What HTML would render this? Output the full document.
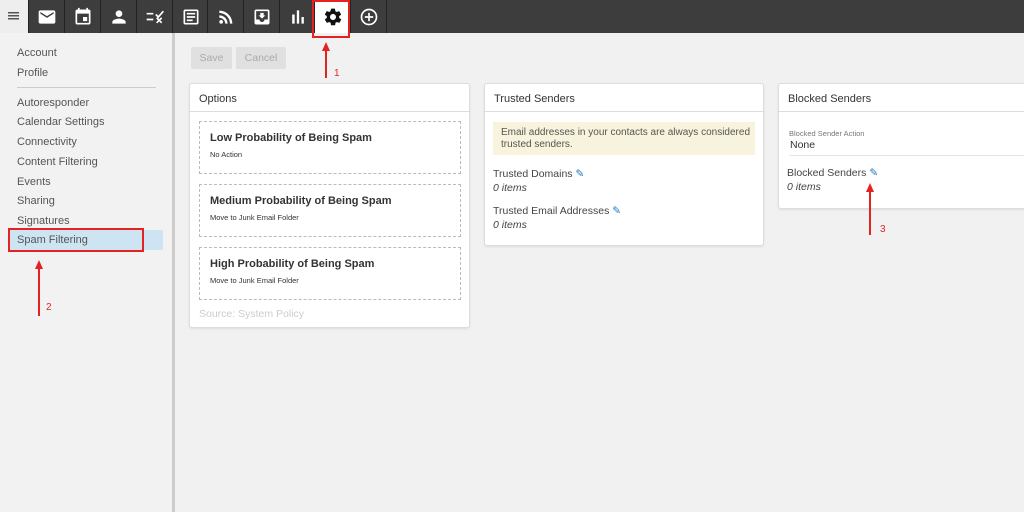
<!DOCTYPE html>
<html><head><style>
*{box-sizing:border-box;margin:0;padding:0}
body{width:1024px;height:512px;overflow:hidden;background:#f1f1f1;font-family:"Liberation Sans",sans-serif;position:relative;color:#333}
.top{position:absolute;left:0;top:0;width:1024px;height:33px;background:#3d3d3d}
.ham{position:absolute;left:0;top:0;width:28px;height:33px;background:#eee}
.tab{position:absolute;top:0;width:36px;height:33px;border-left:1px solid #222;display:flex;align-items:center;justify-content:center}
.side{position:absolute;left:0;top:33px;width:175px;height:479px;background:#f2f2f2;border-right:3px solid #ccc}
.side div{position:absolute;left:17px;font-size:11px;color:#555}
.card{position:absolute;background:#fff;border:1px solid #ddd;border-radius:3px;box-shadow:0 1px 2px rgba(0,0,0,.08)}
.hd{height:28px;border-bottom:1px solid #ddd;font-size:11px;padding:9px 9px}
.box{position:absolute;left:9px;width:262px;height:53px;border:1px dashed #bbb}
.box b{position:absolute;left:10px;top:10px;font-size:11px;color:#333}
.box span{position:absolute;left:10px;top:28px;font-size:7.5px;color:#333}
.t{position:absolute;font-size:10.5px;color:#444}
.i{position:absolute;font-size:10.5px;font-style:italic;color:#444}
.btn{position:absolute;top:47px;height:22px;background:#e0e0e0;color:#aaa;font-size:10.5px;display:flex;align-items:center;justify-content:center;border-radius:2px}
.red{position:absolute;border:2px solid #e52222}
.arr{position:absolute;width:2px;background:#e52222}
.ah{position:absolute;width:0;height:0;border-left:4px solid transparent;border-right:4px solid transparent;border-bottom:9px solid #e52222}
.n{position:absolute;color:#e52222;font-size:10px}
</style></head><body>
<div class="top">
<div class="ham"><svg width="28" height="33"><rect x="8" y="12" width="11" height="1.5" fill="#555"/><rect x="8" y="15" width="11" height="1.5" fill="#555"/><rect x="8" y="18" width="11" height="1.5" fill="#555"/></svg></div>
<div class="tab" style="left:28px"><svg width="20" height="20" viewBox="0 0 24 24"><path fill="#fff" d="M20 4H4c-1.1 0-2 .9-2 2v12c0 1.1.9 2 2 2h16c1.1 0 2-.9 2-2V6c0-1.1-.9-2-2-2zm0 4l-8 5-8-5V6l8 5 8-5v2z"/></svg></div>
<div class="tab" style="left:64px"><svg width="20" height="20" viewBox="0 0 24 24"><path fill="#fff" d="M17 12h-5v5h5v-5zM16 1v2H8V1H6v2H5c-1.1 0-2 .9-2 2v14c0 1.1.9 2 2 2h14c1.1 0 2-.9 2-2V5c0-1.1-.9-2-2-2h-1V1h-2zm3 18H5V8h14v11z"/></svg></div>
<div class="tab" style="left:100px"><svg width="20" height="20" viewBox="0 0 24 24"><path fill="#fff" d="M12 12c2.2 0 4-1.8 4-4s-1.8-4-4-4-4 1.8-4 4 1.8 4 4 4zm0 2c-2.7 0-8 1.3-8 4v2h16v-2c0-2.700-5.3-4-8-4z"/></svg></div>
<div class="tab" style="left:136px"><svg width="20" height="20" viewBox="0 0 24 24"><path fill="none" stroke="#fff" stroke-width="2" d="M2 8h8M2 15h8M13 9l3 3 6-7M14 13l6 6M20 13l-6 6"/></svg></div>
<div class="tab" style="left:172px"><svg width="20" height="20" viewBox="0 0 24 24"><path fill="#fff" d="M19 3H5c-1.1 0-2 .9-2 2v14c0 1.1.9 2 2 2h14c1.1 0 2-.9 2-2V5c0-1.1-.9-2-2-2zm0 16H5V5h14v14zM7 7h10v2H7zm0 4h10v2H7zm0 4h7v2H7z"/></svg></div>
<div class="tab" style="left:207px"><svg width="20" height="20" viewBox="0 0 24 24"><circle cx="6.2" cy="17.8" r="2.2" fill="#fff"/><path fill="#fff" d="M4 4.4v2.8c7 0 12.8 5.8 12.8 12.8h2.8C19.6 11.4 12.6 4.4 4 4.4zm0 5.7v2.8c3.9 0 7.1 3.2 7.1 7.1h2.8c0-5.5-4.4-9.9-9.900-9.9z"/></svg></div>
<div class="tab" style="left:243px"><svg width="20" height="20" viewBox="0 0 24 24"><path fill="#fff" d="M19 3H5c-1.1 0-2 .9-2 2v14c0 1.1.9 2 2 2h14c1.1 0 2-.9 2-2V5c0-1.1-.9-2-2-2zm0 12h-4c0 1.7-1.3 3-3 3s-3-1.3-3-3H5V5h14v10zm-3-5h-2V7h-4v3H8l4 4 4-4z"/></svg></div>
<div class="tab" style="left:279px"><svg width="20" height="20" viewBox="0 0 24 24"><path fill="#fff" d="M5 9h3v11H5zm5.6-5h2.8v16h-2.8zm5.6 8H19v8h-2.8z"/></svg></div>
<div class="tab" style="left:314px;background:#fff"><svg width="20" height="20" viewBox="0 0 24 24"><path fill="#111" d="M19.4 13c.04-.3.06-.6.06-1s-.02-.7-.07-1l2.1-1.6c.2-.15.24-.42.12-.64l-2-3.5c-.12-.2-.4-.3-.6-.2l-2.5 1c-.5-.4-1.1-.7-1.7-1l-.4-2.6C14.4 2.2 14.2 2 14 2h-4c-.2 0-.4.2-.5.4l-.4 2.6c-.6.3-1.2.6-1.7 1l-2.5-1c-.2-.1-.5 0-.6.2l-2 3.5c-.1.2-.1.5.1.6L4.6 11c0 .3-.1.7-.1 1s0 .7.1 1l-2.100 1.6c-.2.15-.24.42-.12.64l2 3.5c.12.2.4.3.6.2l2.5-1c.5.4 1.1.7 1.7 1l.4 2.6c0 .3.2.4.5.4h4c.2 0 .5-.2.5-.4l.4-2.6c.6-.3 1.2-.6 1.7-1l2.5 1c.2.1.5 0 .6-.2l2-3.5c.1-.2.1-.5-.1-.6L19.4 13zM12 15.6c-2 0-3.6-1.6-3.6-3.6S10 8.4 12 8.4s3.6 1.6 3.6 3.6-1.6 3.6-3.600 3.6z"/></svg></div>
<div class="tab" style="left:350px"><svg width="20" height="20" viewBox="0 0 24 24"><circle cx="12" cy="12" r="9" fill="none" stroke="#fff" stroke-width="2"/><path stroke="#fff" stroke-width="2" d="M12 7v10M7 12h10"/></svg></div>
<div class="tab" style="left:386px;width:1px"></div>
</div>
<div class="side">
<div style="top:14px">Account</div>
<div style="top:34px">Profile</div>
<div style="top:54px;left:17px;width:139px;height:1px;background:#ccc"></div>
<div style="top:64px">Autoresponder</div>
<div style="top:83px">Calendar Settings</div>
<div style="top:103px">Connectivity</div>
<div style="top:123px">Content Filtering</div>
<div style="top:143px">Events</div>
<div style="top:162px">Sharing</div>
<div style="top:182px">Signatures</div>
<div style="top:197px;left:8px;width:155px;height:20px;background:#cde4f2"></div>
<div style="top:201px">Spam Filtering</div>
</div>
<div class="btn" style="left:191px;width:41px">Save</div>
<div class="btn" style="left:236px;width:50px">Cancel</div>
<div class="card" style="left:189px;top:83px;width:281px;height:245px">
<div class="hd">Options</div>
<div class="box" style="top:37px"><b>Low Probability of Being Spam</b><span>No Action</span></div>
<div class="box" style="top:100px"><b>Medium Probability of Being Spam</b><span>Move to Junk Email Folder</span></div>
<div class="box" style="top:163px"><b>High Probability of Being Spam</b><span>Move to Junk Email Folder</span></div>
<div class="t" style="left:9px;top:224px;color:#ccc">Source: System Policy</div>
</div>
<div class="card" style="left:484px;top:83px;width:280px;height:163px">
<div class="hd">Trusted Senders</div>
<div style="position:absolute;left:8px;top:38px;width:262px;height:33px;background:#f8f3dc;font-size:10px;color:#555;padding:5px 8px;line-height:12px;white-space:nowrap">Email addresses in your contacts are always considered<br>trusted senders.</div>
<div class="t" style="left:8px;top:84px">Trusted Domains <span style="color:#1a73b8">✎</span></div>
<div class="i" style="left:8px;top:98px">0 items</div>
<div class="t" style="left:8px;top:121px">Trusted Email Addresses <span style="color:#1a73b8">✎</span></div>
<div class="i" style="left:8px;top:135px">0 items</div>
</div>
<div class="card" style="left:778px;top:83px;width:260px;height:126px">
<div class="hd">Blocked Senders</div>
<div style="position:absolute;left:10px;top:45px;font-size:7.5px;color:#777">Blocked Sender Action</div>
<div class="t" style="left:11px;top:55px;color:#333">None</div>
<div style="position:absolute;left:10px;top:71px;width:240px;height:1px;background:#e5e5e5"></div>
<div class="t" style="left:8px;top:83px">Blocked Senders <span style="color:#1a73b8">✎</span></div>
<div class="i" style="left:8px;top:97px">0 items</div>
</div>
<div class="red" style="left:312px;top:0;width:38px;height:38px"></div>
<div class="red" style="left:8px;top:228px;width:136px;height:24px"></div>
<div class="ah" style="left:322px;top:42px"></div><div class="arr" style="left:325px;top:50px;height:28px"></div><div class="n" style="left:334px;top:68px">1</div>
<div class="ah" style="left:35px;top:260px"></div><div class="arr" style="left:38px;top:268px;height:48px"></div><div class="n" style="left:46px;top:302px">2</div>
<div class="ah" style="left:866px;top:183px"></div><div class="arr" style="left:869px;top:191px;height:44px"></div><div class="n" style="left:880px;top:224px">3</div>
</body></html>
